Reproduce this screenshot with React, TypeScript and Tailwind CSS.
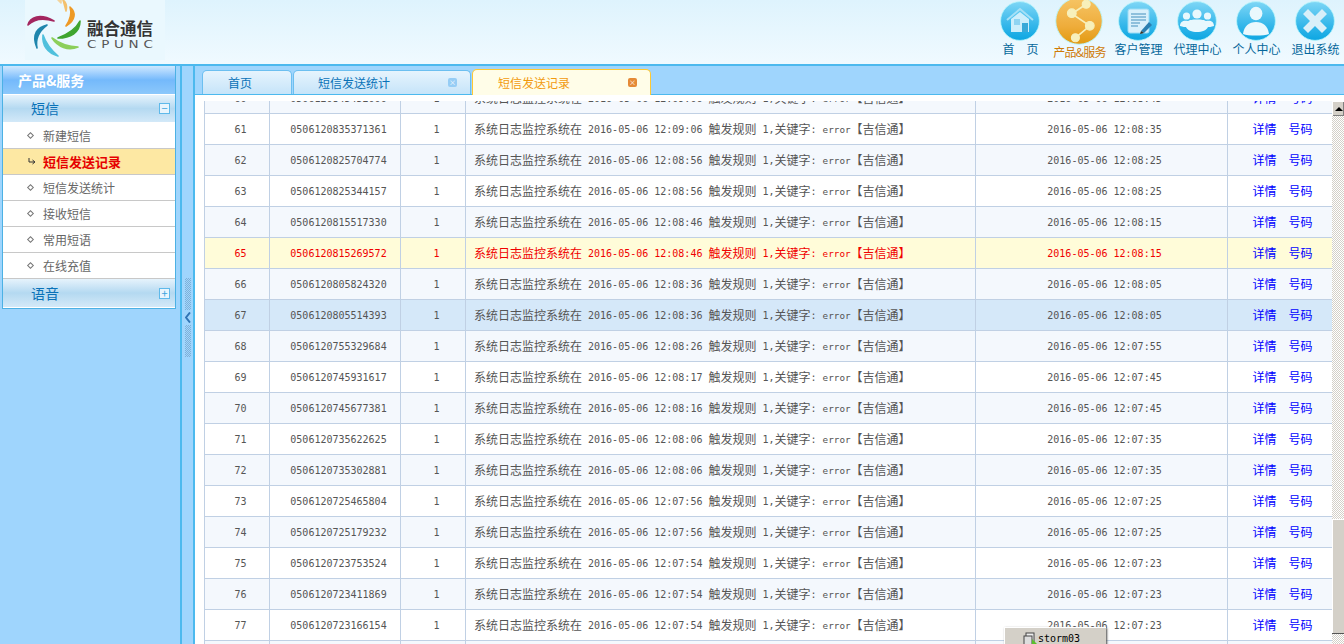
import type { ReactNode } from "react";

const rows = [
  { no: 60, code: "0506120845452000", sent: "12:09:06", recv: "12:08:45" },
  { no: 61, code: "0506120835371361", sent: "12:09:06", recv: "12:08:35" },
  { no: 62, code: "0506120825704774", sent: "12:08:56", recv: "12:08:25" },
  { no: 63, code: "0506120825344157", sent: "12:08:56", recv: "12:08:25" },
  { no: 64, code: "0506120815517330", sent: "12:08:46", recv: "12:08:15" },
  { no: 65, code: "0506120815269572", sent: "12:08:46", recv: "12:08:15" },
  { no: 66, code: "0506120805824320", sent: "12:08:36", recv: "12:08:05" },
  { no: 67, code: "0506120805514393", sent: "12:08:36", recv: "12:08:05" },
  { no: 68, code: "0506120755329684", sent: "12:08:26", recv: "12:07:55" },
  { no: 69, code: "0506120745931617", sent: "12:08:17", recv: "12:07:45" },
  { no: 70, code: "0506120745677381", sent: "12:08:16", recv: "12:07:45" },
  { no: 71, code: "0506120735622625", sent: "12:08:06", recv: "12:07:35" },
  { no: 72, code: "0506120735302881", sent: "12:08:06", recv: "12:07:35" },
  { no: 73, code: "0506120725465804", sent: "12:07:56", recv: "12:07:25" },
  { no: 74, code: "0506120725179232", sent: "12:07:56", recv: "12:07:25" },
  { no: 75, code: "0506120723753524", sent: "12:07:54", recv: "12:07:23" },
  { no: 76, code: "0506120723411869", sent: "12:07:54", recv: "12:07:23" },
  { no: 77, code: "0506120723166154", sent: "12:07:54", recv: "12:07:23" },
  { no: 78, code: "0506120713166000", sent: "12:07:44", recv: "12:07:13" },
];

const menu = ["新建短信", "短信发送记录", "短信发送统计", "接收短信", "常用短语", "在线充值"];

const logoArcs = [
  { d: "M8 25C10 17 20 13 34 21C24 18 14 19 8 25Z", color: "#a3265f" },
  { d: "M27 25C18 27 11 34 17 48C15 38 19 31 27 25Z", color: "#1f86ad" },
  { d: "M23 35C22 45 27 53 38 56C31 50 26 44 23 35Z", color: "#4fc0dc" },
  { d: "M32 38C38 47 48 51 58 47C48 47 40 44 32 38Z", color: "#8ccf5a" },
  { d: "M38 38C50 38 60 33 60 21C56 29 48 34 38 38Z", color: "#3fa52f" },
  { d: "M50 7C56 12 56 20 46 26C50 20 52 13 50 7Z", color: "#ee9a26" },
  { d: "M43 0C47 3 47 7 46 11C45 7 44 3 43 0Z", color: "#f3c06d" },
  { d: "M38 0L41 0L41 3Z", color: "#f3d49b" },
];

function Mono({ children }: { children: ReactNode }) {
  return <span className="align-[1px] font-['DejaVu_Sans_Mono',monospace] text-[10px] whitespace-pre">{children}</span>;
}

function Logo() {
  return (
    <div className="ml-[25px] flex h-[60px] w-[140px] bg-[#eaf8fe]">
      <svg viewBox="0 0 70 60" className="-ml-[5px] h-[60px] w-[70px] shrink-0">
        {logoArcs.map((arc) => (
          <path key={arc.d} d={arc.d} fill={arc.color} stroke={arc.color} strokeWidth="1.6" strokeLinejoin="round" />
        ))}
      </svg>
      <div className="-ml-[3px] flex flex-col pt-[17px]">
        <span className="text-[16.5px] leading-[22px] font-bold text-[#333]">融合通信</span>
        <span className="mt-[1px] origin-left scale-x-[1.35] font-['DejaVu_Sans',sans-serif] text-[10px] leading-[10px] tracking-[3.5px] whitespace-nowrap text-[#555]">CPUNC</span>
      </div>
    </div>
  );
}

function NavIcon({ id, children, active }: { id: string; children: ReactNode; active?: boolean }) {
  return (
    <svg viewBox="0 0 40 40" className={active ? "-mt-[3px] h-[48px] w-[48px]" : "mt-[1px] h-[40px] w-[40px]"}>
      <defs>
        <linearGradient id={id} x1="0" y1="0" x2="0" y2="1">
          <stop offset="0" stopColor={active ? "#f6c565" : "#7ed6f6"} />
          <stop offset="0.6" stopColor={active ? "#efad3c" : "#35b7ea"} />
          <stop offset="1" stopColor={active ? "#e29a10" : "#0ca6e2"} />
        </linearGradient>
      </defs>
      <circle cx="20" cy="20" r="19.4" fill={`url(#${id})`} stroke="#b9f6fb" strokeWidth="0.8" />
      {children}
    </svg>
  );
}

const navItems: { label: string; active?: boolean; icon: ReactNode }[] = [
  {
    label: "首　页",
    icon: (
      <g>
        <path d="M7 19L20 8L33 19" fill="none" stroke="#a5e0f6" strokeWidth="2" />
        <path d="M11 18L20 11L29 18V31H11Z" fill="#cdeefb" />
        <rect x="14" y="18" width="6" height="6" fill="#8fd4f2" />
        <rect x="22" y="22" width="6" height="9" fill="#39a9d8" />
      </g>
    ),
  },
  {
    label: "产品&服务",
    active: true,
    icon: (
      <g fill="#f7f0bb" stroke="#f7f0bb">
        <path d="M26 6L14 14L29 24L17 34" fill="none" strokeWidth="1.4" />
        <circle cx="26" cy="6" r="3.3" />
        <circle cx="14" cy="13.5" r="3.6" />
        <circle cx="29" cy="24" r="3.6" />
        <circle cx="17" cy="34" r="3.3" />
      </g>
    ),
  },
  {
    label: "客户管理",
    icon: (
      <g>
        <rect x="10" y="8" width="21" height="24" rx="2" fill="#d8f0fb" stroke="#9adcf5" />
        <path d="M13 13H28M13 16H28M13 19H28M13 22H22M13 25H20" stroke="#4590bd" strokeWidth="1" />
        <path d="M23 30L31 21L34 24L26 32Z" fill="#2a7fb0" />
        <path d="M23 30L22 33L26 32Z" fill="#3a3020" />
      </g>
    ),
  },
  {
    label: "代理中心",
    icon: (
      <g fill="#e8f8fd">
        <circle cx="9.5" cy="15" r="3.6" />
        <circle cx="30.5" cy="15" r="3.6" />
        <circle cx="20" cy="13" r="4.6" />
        <path d="M3 25C3 20 7 19 11 20C13 19 15 18.5 20 18.5C25 18.5 27 19 29 20C33 19 37 20 37 25C34 26 32 26 31 26C30 29 25 31 20 31C15 31 10 29 9 26C8 26 6 26 3 25Z" />
      </g>
    ),
  },
  {
    label: "个人中心",
    icon: (
      <g fill="#eaf8fd">
        <ellipse cx="20" cy="12.5" rx="6.4" ry="6.8" />
        <path d="M7 33C8 25 13 21 20 21C27 21 32 25 33 33C28 35 12 35 7 33Z" />
      </g>
    ),
  },
  {
    label: "退出系统",
    icon: <path d="M8 13L13 8L20 15L27 8L32 13L25 20L32 27L27 32L20 25L13 32L8 27L15 20Z" fill="#d9eff9" />,
  },
];

function Header() {
  return (
    <header className="flex h-[66px] shrink-0 overflow-hidden border-b-2 border-[#4cb9ee] bg-gradient-to-b from-[#def3fd] to-[#f0faff]">
      <Logo />
      <nav className="ml-auto flex">
        {navItems.map((item, i) => (
          <div key={item.label} className="flex w-[59px] flex-col items-center">
            <NavIcon id={`nav-${i}`} active={item.active}>
              {item.icon}
            </NavIcon>
            <span className={item.active ? "ml-[2px] text-[12px] leading-[14px] tracking-[-0.7px] whitespace-nowrap text-[#cf7a05]" : "mt-[1px] ml-[2px] text-[12px] leading-[14px] whitespace-nowrap text-[#05679b]"}>
              {item.label}
            </span>
          </div>
        ))}
      </nav>
    </header>
  );
}

function Sidebar() {
  return (
    <aside className="w-[180px] shrink-0 bg-[#9fd5fd] pl-[2px]">
      <div className="w-[174px] border-x border-b border-[#4cb1e4]">
        <div className="flex h-[29px] items-center border-b border-white bg-gradient-to-b from-[#cfe8fe] via-[#74b9fb] to-[#8cc8fb] pl-[15px] text-[14px] font-bold text-white">
          产品&服务
        </div>
        <GroupHead label="短信" sign="−" />
        {menu.map((label, i) =>
          i === 1 ? (
            <div key={label} className="flex h-[26px] items-center border-b border-[#c8c8c8] bg-[#fde8a3] pl-[25px] text-[13px] font-bold text-[#e60000]">
              <svg viewBox="0 0 8 7" className="mr-[7px] h-[7px] w-[8px]">
                <path d="M1 0V4H6M4.5 2L7 4L4.5 6" fill="none" stroke="#333" strokeWidth="1" />
              </svg>
              {label}
            </div>
          ) : (
            <div key={label} className="flex h-[26px] items-center border-b border-[#c8c8c8] bg-white pl-[25px] text-[12px] text-[#666]">
              <span className="mr-[10px] h-[5px] w-[5px] rotate-45 border border-[#777]" />
              {label}
            </div>
          )
        )}
        <GroupHead label="语音" sign="+" tall />
      </div>
    </aside>
  );
}

function GroupHead({ label, sign, tall }: { label: string; sign: string; tall?: boolean }) {
  return (
    <div className={`flex ${tall ? "h-[29px]" : "h-[28px]"} items-center justify-between border-b border-white bg-gradient-to-b from-[#e6f3fc] via-[#b4d9f1] to-[#d3e9f8] pr-[5px] pl-[28px] text-[14px] text-[#0a72b8]`}>
      {label}
      <span className="flex h-[11px] w-[11px] items-center justify-center border border-[#5eb9ea] bg-[#e8f5fd] text-[11px] leading-none text-[#3ba3de]">
        {sign}
      </span>
    </div>
  );
}

function Splitter() {
  return (
    <div className="flex w-[15px] shrink-0 flex-col items-center border-x-2 border-[#4cb9ee] bg-[#9fd5fd] pt-[212px]">
      <div className="h-[32px] w-[6px] bg-[repeating-conic-gradient(#7fb0d8_0_25%,transparent_0_50%)] bg-[length:2px_2px]" />
      <svg viewBox="0 0 6 10" className="my-[2px] h-[11px] w-[6px]">
        <path d="M5 0L1 5L5 10" fill="none" stroke="#2f74b5" strokeWidth="2" />
      </svg>
      <div className="h-[32px] w-[6px] bg-[repeating-conic-gradient(#7fb0d8_0_25%,transparent_0_50%)] bg-[length:2px_2px]" />
    </div>
  );
}

function CloseDot({ active }: { active?: boolean }) {
  return (
    <span className={active ? "flex h-[9px] w-[9px] items-center justify-center rounded-[2px] bg-[#e58a36] text-[7px] leading-none text-white" : "flex h-[9px] w-[9px] items-center justify-center rounded-[2px] bg-[#96cdf5] text-[7px] leading-none text-white"}>
      ×
    </span>
  );
}

function Tabs() {
  return (
    <div className="flex h-[29px] shrink-0 items-end gap-[1px] border-b border-[#4cb9ee] bg-[#9fd5fd] pl-[7px]">
      <div className="flex h-[24px] w-[90px] items-center rounded-t-[5px] border-x border-t border-[#6cbff0] bg-gradient-to-b from-[#e6f4fd] to-[#c6e4f9] pl-[25px] text-[12px] text-[#0a72b8]">
        首页
      </div>
      <div className="flex h-[24px] w-[178px] items-center justify-between rounded-t-[5px] border-x border-t border-[#6cbff0] bg-gradient-to-b from-[#e6f4fd] to-[#c6e4f9] pr-[13px] pl-[24px] text-[12px] text-[#0a72b8]">
        短信发送统计
        <CloseDot />
      </div>
      <div className="-mb-[1px] flex h-[26px] w-[179px] items-center justify-between rounded-t-[5px] border-x border-t border-[#ffc933] bg-[#fffde8] pr-[13px] pl-[25px] text-[12px] text-[#f29a0e]">
        短信发送记录
        <CloseDot active />
      </div>
    </div>
  );
}

function DataRow({ no, code, sent, recv }: (typeof rows)[number]) {
  let tone = no % 2 === 0 ? "bg-[#f4f8fd] text-[#555]" : "bg-white text-[#555]";
  if (no === 65) tone = "bg-[#fffcd9] text-[#f00000]";
  if (no === 67) tone = "bg-[#d5e8f9] text-[#555]";
  const cell = "border border-[#c0d0e4] pl-[7px] text-center";
  return (
    <tr className={`h-[31px] ${tone}`}>
      <td className={cell}><Mono>{no}</Mono></td>
      <td className={cell}><Mono>{code}</Mono></td>
      <td className={cell}><Mono>1</Mono></td>
      <td className="border border-[#c0d0e4] pl-[8px] whitespace-nowrap">
        系统日志监控系统在<Mono> 2016-05-06 {sent} </Mono>触发规则<Mono> 1,</Mono>关键字<Mono>: </Mono>
        <span className="align-[1px] font-['DejaVu_Sans_Mono',monospace] text-[9.3px]">error</span>【吉信通】
      </td>
      <td className="border border-[#c0d0e4] pl-[6px] text-center"><Mono>2016-05-06 {recv}</Mono></td>
      <td className="border border-[#c0d0e4] pl-[5px] text-center text-[#0000ff]">
        <span>详情</span>
        <span className="ml-[12px]">号码</span>
      </td>
    </tr>
  );
}

function Scrollbar() {
  return (
    <div className="flex w-[12px] shrink-0 flex-col bg-[repeating-conic-gradient(#d4d0c8_0_25%,#fff_0_50%)] bg-[length:2px_2px]">
      <div className="flex h-[15px] items-center justify-center border-t border-l border-white bg-[#d4d0c8] shadow-[inset_-1px_-1px_0_#808080]">
        <span className="h-0 w-0 border-x-[4px] border-b-[4px] border-x-transparent border-b-black" />
      </div>
      <div className="mt-[403px] h-[114px] border-t border-l border-white bg-[#d4d0c8] shadow-[0_1px_0_#555]" />
    </div>
  );
}

export default function App() {
  return (
    <div className="relative flex h-[644px] w-[1344px] flex-col overflow-hidden bg-white font-['Noto_Sans_CJK_SC',sans-serif] text-[12px]">
      <Header />
      <div className="flex min-h-0 flex-1">
        <Sidebar />
        <Splitter />
        <main className="flex min-w-0 flex-1 flex-col">
          <Tabs />
          <div className="mt-[6px] flex min-h-0 flex-1">
            <div className="min-w-0 flex-1 overflow-hidden pl-[9px]">
              <table className="-mt-[19px] w-[1128px] table-fixed border-collapse">
                <colgroup>
                  <col className="w-[65px]" />
                  <col className="w-[131px]" />
                  <col className="w-[65px]" />
                  <col className="w-[510px]" />
                  <col className="w-[252px]" />
                  <col className="w-[105px]" />
                </colgroup>
                <tbody>
                  {rows.map((r) => (
                    <DataRow key={r.no} {...r} />
                  ))}
                </tbody>
              </table>
            </div>
            <Scrollbar />
          </div>
        </main>
      </div>
      {/* taskbar tooltip that sits over the table */}
      <div className="absolute top-[627px] left-[1004px] flex h-[20px] w-[102px] items-start border-t border-l border-white bg-[#d4d0c8] pt-[4px] pl-[18px] shadow-[1px_1px_2px_#444]">
        <svg viewBox="0 0 14 14" className="h-[14px] w-[14px]">
          <rect x="3" y="1" width="8" height="11" fill="#eee" stroke="#444" />
          <rect x="1" y="4" width="8" height="10" fill="#ddd" stroke="#444" />
          <path d="M9 7L14 12H9Z" fill="#5cc02c" />
        </svg>
        <span className="mt-[1px] ml-[1px] font-['DejaVu_Sans_Mono',monospace] text-[10px] leading-[12px] text-black">storm03</span>
      </div>
    </div>
  );
}
